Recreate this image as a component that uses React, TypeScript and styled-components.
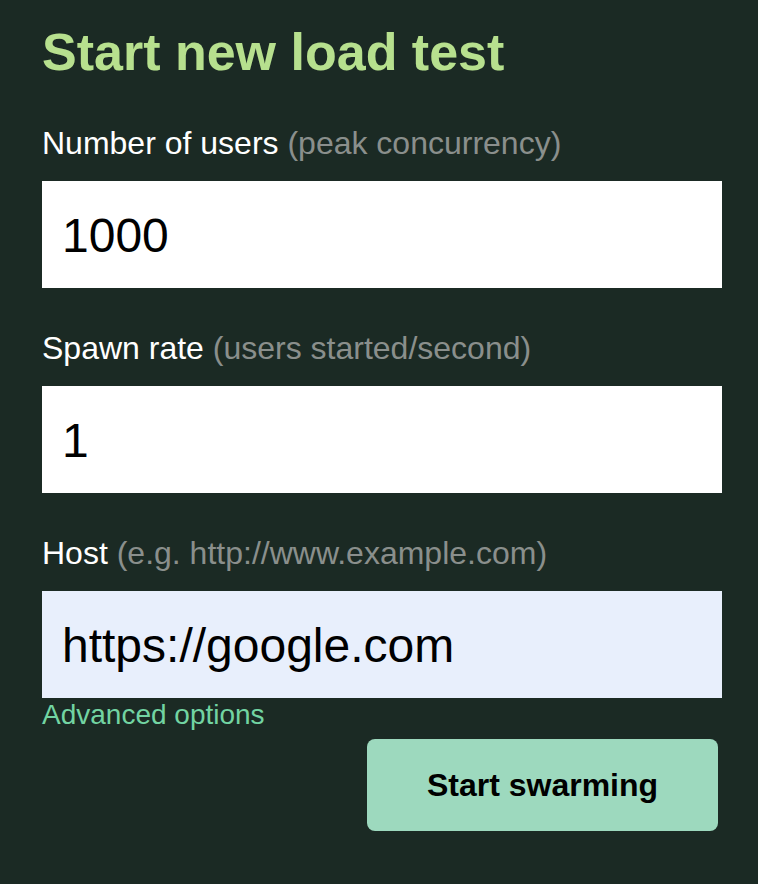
import React from "react";
import styled, { createGlobalStyle } from "styled-components";

const GlobalStyle = createGlobalStyle`
  html, body {
    margin: 0;
    padding: 0;
    background: #1b2a24;
  }
  body {
    font-family: "Liberation Sans", Arial, sans-serif;
  }
`;

const Page = styled.div`
  min-height: 884px;
  background: #1b2a24;
  padding: 22px 36px 0 42px;
  box-sizing: border-box;
`;

const Form = styled.form`
  display: flex;
  flex-direction: column;
  width: 680px;
`;

const Title = styled.h2`
  margin: 0 0 43px 0;
  font-size: 52px;
  line-height: 60px;
  font-weight: 700;
  color: #b7e08e;
`;

const Field = styled.div`
  display: flex;
  flex-direction: column;
  gap: 20px;
  & + & {
    margin-top: 42px;
  }
`;

const Label = styled.label`
  font-size: 32px;
  line-height: 36px;
  color: #ffffff;
`;

const Hint = styled.span`
  color: #8a8f8c;
`;

const Input = styled.input<{ $filled?: boolean }>`
  box-sizing: border-box;
  height: 107px;
  width: 100%;
  border: none;
  outline: none;
  margin: 0;
  padding: 2px 20px 0 20px;
  font-family: "Liberation Sans", Arial, sans-serif;
  font-size: 48px;
  color: #000;
  background: ${(p) => (p.$filled ? "#e8effc" : "#ffffff")};
`;

const Advanced = styled.a`
  font-size: 28px;
  line-height: 32px;
  margin-top: 1px;
  color: #72d4a2;
  text-decoration: none;
  cursor: pointer;
  align-self: flex-start;
`;

const Actions = styled.div`
  display: flex;
  justify-content: flex-end;
  padding-right: 4px;
  margin-top: 8px;
`;

const Button = styled.button`
  width: 351px;
  height: 92px;
  border: none;
  border-radius: 8px;
  background: #9dd9be;
  color: #000;
  font-family: "Liberation Sans", Arial, sans-serif;
  font-weight: 700;
  font-size: 32px;
  cursor: pointer;
`;

export default function App() {
  return (
    <>
      <GlobalStyle />
      <Page>
        <Form onSubmit={(e) => e.preventDefault()}>
          <Title>Start new load test</Title>
          <Field>
            <Label>
              Number of users <Hint>(peak concurrency)</Hint>
            </Label>
            <Input defaultValue="1000" />
          </Field>
          <Field>
            <Label>
              Spawn rate <Hint>(users started/second)</Hint>
            </Label>
            <Input defaultValue="1" />
          </Field>
          <Field>
            <Label>
              Host <Hint>(e.g. http://www.example.com)</Hint>
            </Label>
            <Input defaultValue="https://google.com" $filled />
          </Field>
          <Advanced>Advanced options</Advanced>
          <Actions>
            <Button type="submit">Start swarming</Button>
          </Actions>
        </Form>
      </Page>
    </>
  );
}
